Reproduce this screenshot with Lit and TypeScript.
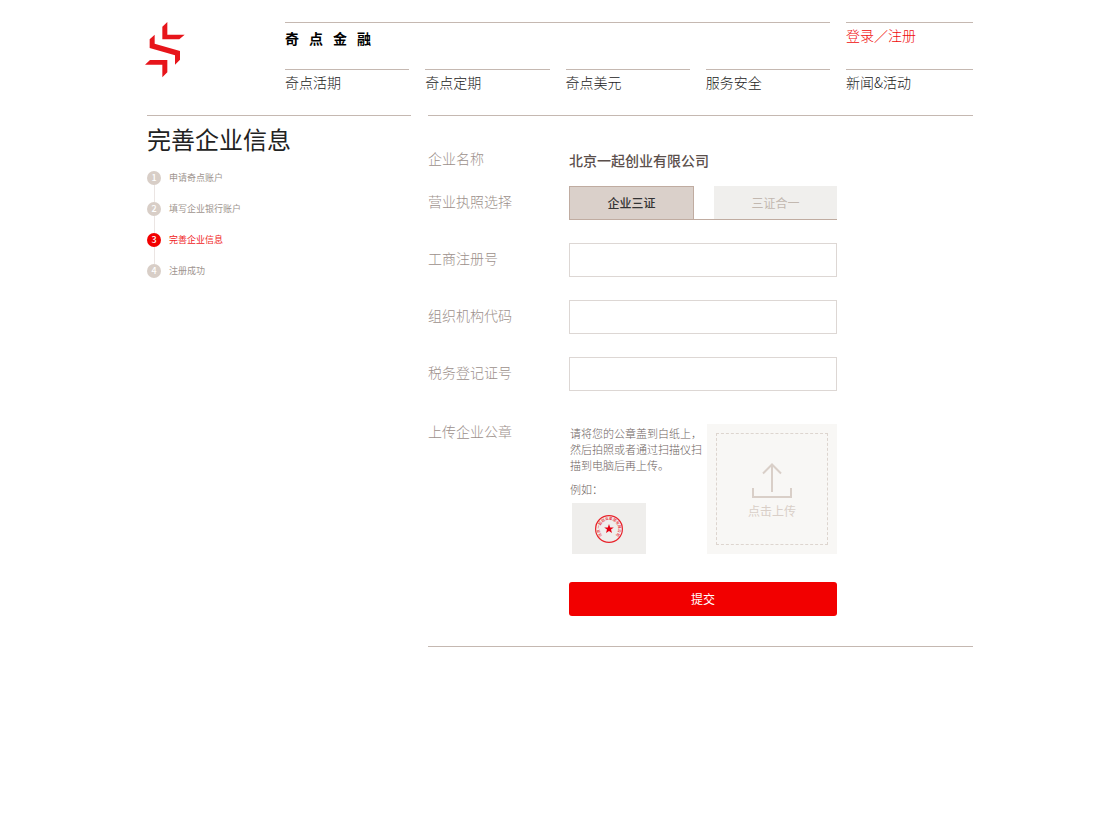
import { LitElement, html, css } from "lit";
import { customElement, state } from "lit/decorators.js";
import { classMap } from "lit/directives/class-map.js";

const NAV = ["奇点活期", "奇点定期", "奇点美元", "服务安全", "新闻&活动"];
const STEPS = ["申请奇点账户", "填写企业银行账户", "完善企业信息", "注册成功"];
const LICENSES = ["企业三证", "三证合一"];
const FIELDS = [
  { id: "reg-no", label: "工商注册号" },
  { id: "org-code", label: "组织机构代码" },
  { id: "tax-no", label: "税务登记证号" },
];

@customElement("site-header")
class SiteHeader extends LitElement {
  static styles = css`
    :host { display: block; }
    .header { display: grid; grid-template-columns: 140px minmax(0, 1fr); }
    .logo { display: block; width: 40px; height: 56px; }
    .links {
      display: grid;
      grid-template-columns: repeat(4, minmax(0, 1fr)) 127px;
      grid-template-rows: 47px 46px;
      column-gap: 16px;
      font-size: 14px;
      line-height: 20px;
      font-weight: 300;
    }
    .cell { border-top: 1px solid #c5b8b1; padding-top: 2px; }
    .brand {
      grid-column: span 4;
      display: flex;
      gap: 10px;
      padding-top: 5px;
      color: #000;
      font-weight: 700;
    }
    a { color: #222; text-decoration: none; }
    .login { color: #f00a0a; }
  `;
  render() {
    return html`<header class="header">
      <svg class="logo" viewBox="30 36 120 168" fill="#e7151b" aria-hidden="true">
        <path d="M82 50 97 36V74H149L133 88H82Z" />
        <path d="M44 88 59 74V101L135 123V149L120 164V136L44 114Z" />
        <path d="M30 164 45 150H97V187L82 202V164Z" />
      </svg>
      <nav class="links">
        <div class="cell brand">${[..."奇点金融"].map((c) => html`<span>${c}</span>`)}</div>
        <div class="cell"><a class="login" href="#login">登录／注册</a></div>
        ${NAV.map((n) => html`<div class="cell"><a href="#">${n}</a></div>`)}
      </nav>
    </header>`;
  }
}

@customElement("step-list")
class StepList extends LitElement {
  static styles = css`
    :host { display: block; border-top: 1px solid #c5b8b1; }
    h1 { margin: 0; padding: 7px 0 16px; font-size: 24px; line-height: 32px; font-weight: 400; color: #222; }
    ol { list-style: none; margin: 0; padding: 0; }
    li { display: flex; gap: 8px; font-size: 9px; line-height: 14px; color: #a0958f; }
    .track { display: flex; flex-direction: column; align-items: center; }
    .dot {
      width: 14px; height: 14px; border-radius: 50%;
      background: #d8cec7; color: #fff; text-align: center; font-weight: 500;
    }
    .line { width: 1px; height: 17px; background: #ebe5e3; }
    .current { color: #f01c1c; }
    .current .dot { background: #f20000; }
  `;
  render() {
    return html`<h1>完善企业信息</h1>
      <ol>
        ${STEPS.map(
          (s, i) => html`<li class=${classMap({ current: i === 2 })}>
            <div class="track">
              <span class="dot">${i + 1}</span>
              ${i < STEPS.length - 1 ? html`<span class="line"></span>` : ""}
            </div>
            <span>${s}</span>
          </li>`
        )}
      </ol>`;
  }
}

@customElement("company-form")
class CompanyForm extends LitElement {
  @state() license = 0;

  static styles = css`
    :host { display: block; border: solid #c5b8b1; border-width: 1px 0; }
    * { box-sizing: border-box; }
    form { padding: 35px 0 30px; }
    .row {
      display: grid;
      grid-template-columns: 141px minmax(0, 268px);
      align-items: center;
      margin-top: 23px;
    }
    .name { margin: 0 0 17px; line-height: 18px; }
    .tabs-row { margin-top: 0; }
    .caption { padding-bottom: 4px; font-size: 14px; line-height: 14px; font-weight: 300; color: #9c908b; }
    .company { font-size: 14px; font-weight: 500; color: #5b4f4c; }
    button { font-family: inherit; font-size: 12px; line-height: 16px; cursor: pointer; }
    .tabs { display: flex; gap: 20px; height: 34px; border-bottom: 1px solid #c0aca1; }
    .tab { flex: 1; border: 0; padding: 0; background: #f0efed; color: #c2b8b0; }
    .tab.on {
      border: solid #c0aca1;
      border-width: 1px 1px 0;
      background: #dad0ca;
      color: #333;
      font-weight: 500;
    }
    .text {
      width: 100%; height: 34px; padding: 0 10px;
      border: 1px solid #ddd7d4; border-radius: 0; background: #fff;
      font: inherit; font-size: 14px;
    }
    .upload-row { align-items: start; margin-top: 33px; }
    .upload { display: grid; grid-template-columns: minmax(0, 1fr) 130px; column-gap: 5px; }
    .help { padding: 1px 0 0 1px; font-size: 11px; line-height: 16px; font-weight: 300; color: #6d625e; }
    .help p { margin: 0 0 8px; }
    .sample {
      display: flex; align-items: center; justify-content: center;
      width: 74px; height: 51px; margin: -2px 0 0 2px; background: #efeeec;
    }
    .seal { width: 30px; height: 30px; }
    .drop { display: block; height: 130px; padding: 9px; background: #f8f7f5; cursor: pointer; }
    .frame {
      display: flex; flex-direction: column; align-items: center;
      height: 112px; padding-top: 29px;
      border: 1px dashed #ddd5cf;
      font-size: 12px; line-height: 16px; color: #d9cfc8;
    }
    .arrow { width: 40px; height: 36px; margin-bottom: 4px; }
    .file { position: absolute; width: 1px; height: 1px; opacity: 0; }
    .action { margin-top: 28px; }
    .submit { grid-column: 2; height: 34px; border: 0; border-radius: 3px; background: #f20000; color: #fff; }
  `;

  render() {
    return html`<form @submit=${(e: Event) => e.preventDefault()}>
      <div class="row name">
        <span class="caption">企业名称</span>
        <span class="company">北京一起创业有限公司</span>
      </div>
      <div class="row tabs-row">
        <span class="caption" id="license">营业执照选择</span>
        <div class="tabs" role="group" aria-labelledby="license">
          ${LICENSES.map(
            (l, i) => html`<button
              type="button"
              class=${classMap({ tab: true, on: this.license === i })}
              aria-pressed=${this.license === i ? "true" : "false"}
              @click=${() => (this.license = i)}
            >${l}</button>`
          )}
        </div>
      </div>
      ${FIELDS.map(
        (f) => html`<div class="row">
          <label class="caption" for=${f.id}>${f.label}</label>
          <input class="text" type="text" id=${f.id} />
        </div>`
      )}
      <div class="row upload-row">
        <label class="caption" for="seal-file">上传企业公章</label>
        <div class="upload">
          <div class="help">
            <p>请将您的公章盖到白纸上，然后拍照或者通过扫描仪扫描到电脑后再上传。</p>
            <p>例如：</p>
            <div class="sample">
              <svg class="seal" viewBox="0 0 30 30" aria-hidden="true">
                <circle cx="15" cy="15" r="13.4" fill="none" stroke="#e8222a" stroke-width="1.2" />
                <path id="arc" d="M8.4 21.6A9.3 9.3 0 1 1 21.6 21.6" fill="none" />
                <text font-size="3.6" font-weight="500" fill="#e8222a"><textPath href="#arc">北京一起创业集团有限公司</textPath></text>
                <path fill="#e60012" d="M15 10 16.2 13.4H19.8L17 15.6 18 19.1 15 17 12 19.1 13 15.6 10.2 13.4H13.8Z" />
              </svg>
            </div>
          </div>
          <label class="drop">
            <span class="frame">
              <svg class="arrow" viewBox="0 0 40 36" fill="none" stroke="#d9cfc8" stroke-width="2" aria-hidden="true">
                <path d="M20 29V1.5M11 10.5 20 1.5 29 10.5M1 25V34H39V25" />
              </svg>
              <span>点击上传</span>
            </span>
            <input class="file" id="seal-file" type="file" accept="image/*" />
          </label>
        </div>
      </div>
      <div class="row action">
        <button class="submit" type="submit">提交</button>
      </div>
    </form>`;
  }
}

@customElement("app-root")
class AppRoot extends LitElement {
  static styles = css`
    :host {
      display: block;
      min-height: 100vh;
      background: #fff;
      font-family: "Noto Sans CJK SC", "Noto Sans", sans-serif;
    }
    .page { box-sizing: border-box; padding: 22px 127px 40px 145px; }
    .body {
      display: grid;
      grid-template-columns: minmax(0, 264fr) minmax(0, 545fr);
      column-gap: 17px;
      align-items: start;
      padding-left: 2px;
    }
  `;
  render() {
    return html`<div class="page">
      <site-header></site-header>
      <main class="body">
        <step-list></step-list>
        <company-form></company-form>
      </main>
    </div>`;
  }
}
